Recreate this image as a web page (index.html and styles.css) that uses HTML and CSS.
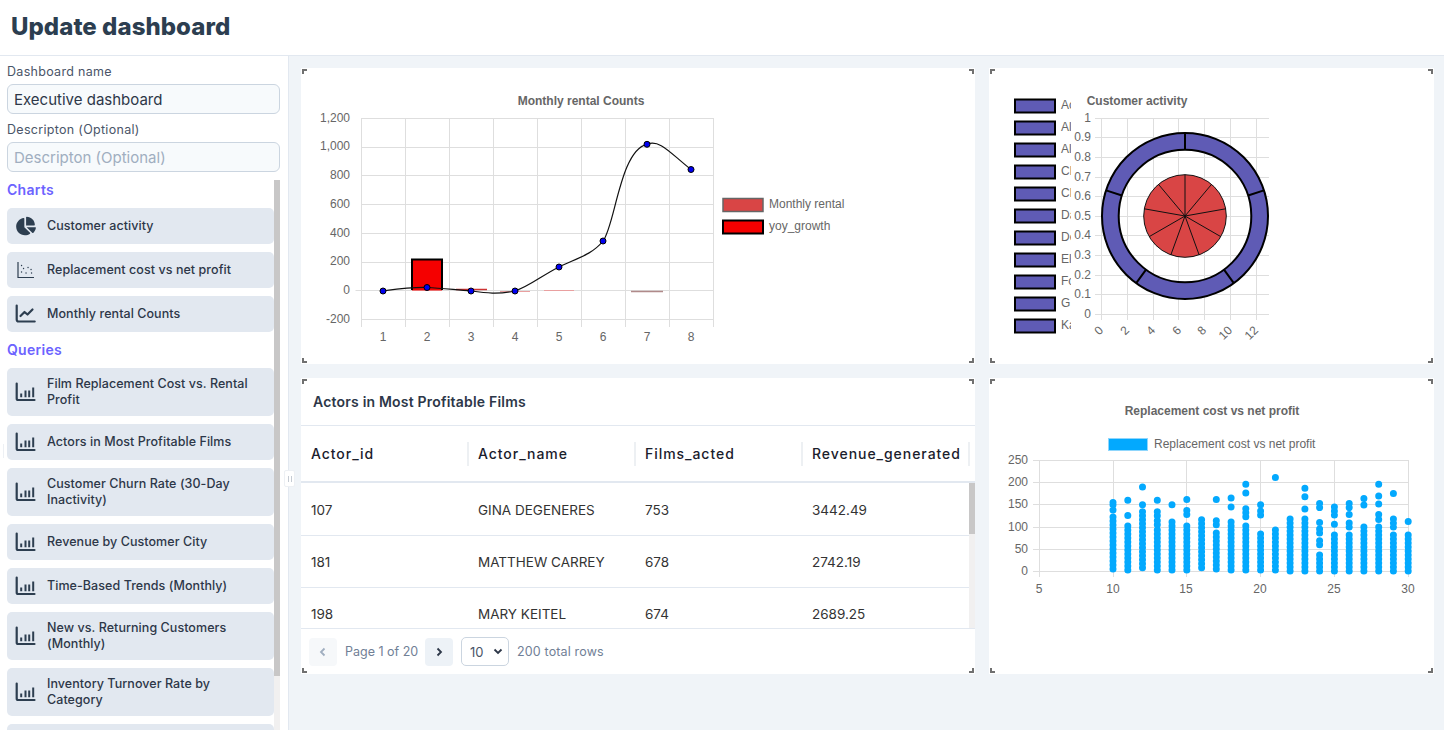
FILE: index.html
```html
<!DOCTYPE html>
<html lang="en">

<head>
    <meta charset="UTF-8">
    <meta name="viewport" content="width=device-width, initial-scale=1.0">
    <title>Update dashboard</title>
    <link rel="stylesheet" href="styles.css">
</head>

<body>
    <svg class="icon-defs" width="0" height="0">
        <symbol id="icon-pie" viewBox="0 0 576 512">
            <path fill="currentColor" d="M304 240V16.6c0-9 7-16.6 16-16.6C443.7 0 544 100.3 544 224c0 9-7.6 16-16.6 16H304zM32 272C32 150.7 122.1 50.3 239 34.3c9.2-1.3 17 6.1 17 15.4V288L412.5 444.5c6.7 6.7 6.2 17.7-1.5 23.1C371.8 495.6 323.8 512 272 512C139.5 512 32 404.6 32 272zm526.4 16c9.3 0 16.6 7.8 15.4 17c-7.7 55.9-34.6 105.6-73.9 142.3c-6 5.6-15.4 5.2-21.2-.7L320 288H558.4z" />
        </symbol>
        <symbol id="icon-scatter" viewBox="0 0 20 20">
            <path fill="none" stroke="currentColor" stroke-width="1.2" d="M2.5 2v15.5h16" />
            <path fill="none" stroke="currentColor" stroke-width="1.3" stroke-linecap="round" d="M6 5.5h.1M6 12h.1M8 8.5h.1M10.5 13h.1M12.5 7.5h.1M15.5 9.5h.1M16 13h.1" />
        </symbol>
        <symbol id="icon-line" viewBox="0 0 20 20">
            <path fill="none" stroke="currentColor" stroke-width="2.2" stroke-linecap="round" d="M1.2 1.5v14a2 2 0 0 0 2 2h16" />
            <path fill="none" stroke="currentColor" stroke-width="2.2" stroke-linecap="round" stroke-linejoin="round" d="M5 12l4-4 3 2.5 5-5" />
        </symbol>
        <symbol id="icon-bar" viewBox="0 0 20 20">
            <path fill="none" stroke="currentColor" stroke-width="2.2" stroke-linecap="round" d="M1.2 1.5v15a1.5 1.5 0 0 0 1.5 1.5h16.300" />
            <path fill="none" stroke="currentColor" stroke-width="2" d="M5.7 15.2v-3.600M10 15.2V8.5M13.7 15.2V8.5M17.7 15.2V5.5" />
        </symbol>
    </svg>

    <header class="topbar">
        <h1>Update dashboard</h1>
    </header>

    <div class="layout">
        <aside class="sidebar">
            <div class="form">
                <label for="dash-name">Dashboard name</label>
                <input id="dash-name" type="text" value="Executive dashboard">
                <label for="dash-desc">Descripton (Optional)</label>
                <input id="dash-desc" type="text" placeholder="Descripton (Optional)">
            </div>
            <div class="side-list">
                <h2>Charts</h2>
                <div class="card"><svg class="card-icon"><use href="#icon-pie" /></svg><span>Customer activity</span></div>
                <div class="card"><svg class="card-icon"><use href="#icon-scatter" /></svg><span>Replacement cost vs net profit</span></div>
                <div class="card"><svg class="card-icon"><use href="#icon-line" /></svg><span>Monthly rental Counts</span></div>
                <h2>Queries</h2>
                <div class="card"><svg class="card-icon"><use href="#icon-bar" /></svg><span>Film Replacement Cost vs. Rental Profit</span></div>
                <div class="card"><svg class="card-icon"><use href="#icon-bar" /></svg><span>Actors in Most Profitable Films</span></div>
                <div class="card"><svg class="card-icon"><use href="#icon-bar" /></svg><span>Customer Churn Rate (30-Day Inactivity)</span></div>
                <div class="card"><svg class="card-icon"><use href="#icon-bar" /></svg><span>Revenue by Customer City</span></div>
                <div class="card"><svg class="card-icon"><use href="#icon-bar" /></svg><span>Time-Based Trends (Monthly)</span></div>
                <div class="card"><svg class="card-icon"><use href="#icon-bar" /></svg><span>New vs. Returning Customers (Monthly)</span></div>
                <div class="card"><svg class="card-icon"><use href="#icon-bar" /></svg><span>Inventory Turnover Rate by Category</span></div>
                <div class="card"></div>
            </div>
            <div class="scrollbar side-scroll"><div class="scroll-thumb"></div></div>
            <div class="resize-handle"><i></i><i></i></div>
        </aside>

        <main class="board">
            <section class="panel">
                <svg class="chart" viewBox="301 68 674 296">
                    <text class="chart-title" x="581" y="105" text-anchor="middle">Monthly rental Counts</text>
                    <path class="grid" d="M361.5 118.5H713.5M361.5 147.5H713.5M361.5 175.5H713.5M361.5 204.5H713.5M361.5 233.5H713.5M361.5 262.5H713.5M355.5 290.5H713.5M361.5 319.5H713.5" />
                    <path class="grid" d="M361.5 118V327M405.5 118V327M449.5 118V327M493.5 118V327M537.5 118V327M581.5 118V327M625.5 118V327M669.5 118V327M713.5 118V327" />
                    <g class="tick" text-anchor="end">
                        <text x="350" y="122">1,200</text>
                        <text x="350" y="150">1,000</text>
                        <text x="350" y="179">800</text>
                        <text x="350" y="208">600</text>
                        <text x="350" y="237">400</text>
                        <text x="350" y="265">200</text>
                        <text x="350" y="294">0</text>
                        <text x="350" y="323">-200</text>
                    </g>
                    <g class="tick" text-anchor="middle">
                        <text x="383" y="341">1</text>
                        <text x="427" y="341">2</text>
                        <text x="471" y="341">3</text>
                        <text x="515" y="341">4</text>
                        <text x="559" y="341">5</text>
                        <text x="603" y="341">6</text>
                        <text x="647" y="341">7</text>
                        <text x="691" y="341">8</text>
                    </g>
                    <rect x="412" y="259.5" width="30" height="31" fill="#f50000" />
                    <path fill="none" stroke="#000" stroke-width="2" d="M412 290V259.5H442V290" />
                    <path fill="none" stroke="#c33" stroke-width="1.5" d="M456 289.5H487" />
                    <path fill="none" stroke="#e9a0a0" stroke-width="1" d="M500 291.5H530M544 290.5H574" />
                    <path fill="none" stroke="#b08a8a" stroke-width="1.5" d="M631 291.5H663" />
                    <path fill="none" stroke="#111" stroke-width="1.2" d="M383 291C398 289 412 287 427 287.5C442 288 456 290 471 291C486 293 498 294.5 515 291C530 286 541 276 559 267C575 259 592 255 603 241C615 226 620 150 647 144.3C660 139 670 153 691 169.5" />
                    <g fill="#0000f0" stroke="#000" stroke-width="1">
                        <circle cx="383" cy="291" r="3" />
                        <circle cx="427" cy="287.5" r="3" />
                        <circle cx="471" cy="291" r="3" />
                        <circle cx="515" cy="291" r="3" />
                        <circle cx="559" cy="267" r="3" />
                        <circle cx="603" cy="241" r="3" />
                        <circle cx="647" cy="144.3" r="3" />
                        <circle cx="691" cy="169.5" r="3" />
                    </g>
                    <rect x="723" y="198.5" width="40" height="13" fill="#d94545" stroke="#666" stroke-width="1.5" />
                    <text class="tick" x="769" y="208">Monthly rental</text>
                    <rect x="723" y="220.5" width="40" height="13" fill="#f50000" stroke="#000" stroke-width="2" />
                    <text class="tick" x="769" y="230">yoy_growth</text>
                </svg>
                <span class="corner tl"></span><span class="corner tr"></span><span class="corner bl"></span><span class="corner br"></span>
            </section>

            <section class="panel">
                <svg class="chart" viewBox="989 68 445 296">
                    <defs>
                        <clipPath id="legend-clip">
                            <rect x="1010" y="90" width="61" height="250" />
                        </clipPath>
                    </defs>
                    <g fill="#5f5bb5" stroke="#000" stroke-width="2">
                        <rect x="1015" y="99.5" width="40" height="13" />
                        <rect x="1015" y="121.5" width="40" height="13" />
                        <rect x="1015" y="143.5" width="40" height="13" />
                        <rect x="1015" y="165.5" width="40" height="13" />
                        <rect x="1015" y="187.5" width="40" height="13" />
                        <rect x="1015" y="209.5" width="40" height="13" />
                        <rect x="1015" y="231.5" width="40" height="13" />
                        <rect x="1015" y="253.5" width="40" height="13" />
                        <rect x="1015" y="275.5" width="40" height="13" />
                        <rect x="1015" y="297.5" width="40" height="13" />
                        <rect x="1015" y="319.5" width="40" height="13" />
                    </g>
                    <g class="tick" clip-path="url(#legend-clip)">
                        <text x="1061" y="109">Ac</text>
                        <text x="1061" y="131">Al</text>
                        <text x="1061" y="153">Al</text>
                        <text x="1061" y="175">Cl</text>
                        <text x="1061" y="197">Cl</text>
                        <text x="1061" y="219">Da</text>
                        <text x="1061" y="241">De</text>
                        <text x="1061" y="263">El</text>
                        <text x="1061" y="285">Fo</text>
                        <text x="1061" y="307">G</text>
                        <text x="1061" y="329">Ka</text>
                    </g>
                    <text class="chart-title" x="1137" y="105" text-anchor="middle">Customer activity</text>
                    <path class="grid" d="M1095 118.5H1269M1095 137.5H1269M1095 157.5H1269M1095 177.5H1269M1095 196.5H1269M1095 216.5H1269M1095 235.5H1269M1095 255.5H1269M1095 275.5H1269M1095 294.5H1269M1095 314.5H1269" />
                    <path class="grid" d="M1101.5 118V320M1127.5 118V320M1153.5 118V320M1178.5 118V320M1204.5 118V320M1230.5 118V320M1256.5 118V320" />
                    <g class="tick" text-anchor="end">
                        <text x="1091" y="122">1</text>
                        <text x="1091" y="141">0.9</text>
                        <text x="1091" y="161">0.8</text>
                        <text x="1091" y="181">0.7</text>
                        <text x="1091" y="200">0.6</text>
                        <text x="1091" y="220">0.5</text>
                        <text x="1091" y="239">0.4</text>
                        <text x="1091" y="259">0.3</text>
                        <text x="1091" y="279">0.2</text>
                        <text x="1091" y="298">0.1</text>
                        <text x="1091" y="318">0</text>
                    </g>
                    <g class="tick" text-anchor="end">
                        <text transform="translate(1104 331) rotate(-45)">0</text>
                        <text transform="translate(1130 331) rotate(-45)">2</text>
                        <text transform="translate(1156 331) rotate(-45)">4</text>
                        <text transform="translate(1182 331) rotate(-45)">6</text>
                        <text transform="translate(1207 331) rotate(-45)">8</text>
                        <text transform="translate(1233 331) rotate(-45)">10</text>
                        <text transform="translate(1259 331) rotate(-45)">12</text>
                    </g>
                    <circle cx="1185" cy="216" r="74.7" fill="none" stroke="#5f5bb5" stroke-width="16.7" />
                    <circle cx="1185" cy="216" r="83" fill="none" stroke="#000" stroke-width="2" />
                    <circle cx="1185" cy="216" r="66.3" fill="none" stroke="#000" stroke-width="2" />
                    <path fill="none" stroke="#000" stroke-width="2" d="M1185 149.7V133M1248.1 195.5L1263.9 190.4M1224 269.6L1233.8 283.1M1146 269.6L1136.2 283.1M1121.9 195.5L1106.1 190.4" />
                    <circle cx="1185" cy="216" r="41.3" fill="#d94545" stroke="#111" stroke-width="1" />
                    <path fill="none" stroke="#111" stroke-width="1" d="M1185 216V174.7M1185 216L1211.5 184.4M1185 216L1225.7 208.8M1185 216L1220.8 236.65M1185 216L1199.1 254.8M1185 216L1170.9 254.8M1185 216L1149.2 236.65M1185 216L1144.3 208.8M1185 216L1158.5 184.4" />
                </svg>
                <span class="corner tl"></span><span class="corner tr"></span><span class="corner bl"></span><span class="corner br"></span>
            </section>

            <section class="panel table-panel">
                <h3>Actors in Most Profitable Films</h3>
                <div class="table-head">
                    <div>Actor_id</div>
                    <div>Actor_name</div>
                    <div>Films_acted</div>
                    <div>Revenue_generated</div>
                </div>
                <div class="table-body">
                    <div class="table-rows">
                        <div class="table-row">
                            <div>107</div>
                            <div>GINA DEGENERES</div>
                            <div>753</div>
                            <div>3442.49</div>
                        </div>
                        <div class="table-row">
                            <div>181</div>
                            <div>MATTHEW CARREY</div>
                            <div>678</div>
                            <div>2742.19</div>
                        </div>
                        <div class="table-row">
                            <div>198</div>
                            <div>MARY KEITEL</div>
                            <div>674</div>
                            <div>2689.25</div>
                        </div>
                    </div>
                    <div class="scrollbar table-scroll"><div class="scroll-thumb"></div></div>
                </div>
                <div class="pager">
                    <button class="page-btn" disabled>
                        <svg width="12" height="12" viewBox="0 0 12 12"><path d="M7.5 2.5L4 6l3.5 3.5" /></svg>
                    </button>
                    <span class="page-text page-count">Page 1 of 20</span>
                    <button class="page-btn">
                        <svg width="12" height="12" viewBox="0 0 12 12"><path d="M4.5 2.5L8 6 4.5 9.5" /></svg>
                    </button>
                    <div class="page-size">
                        <select>
                            <option>10</option>
                        </select>
                        <svg width="12" height="12" viewBox="0 0 12 12"><path d="M2.5 4.5L6 8l3.5-3.5" /></svg>
                    </div>
                    <span class="page-text page-total">200 total rows</span>
                </div>
                <span class="corner tl"></span><span class="corner tr"></span><span class="corner bl"></span><span class="corner br"></span>
            </section>

            <section class="panel">
                <svg class="chart" viewBox="989 378 445 296">
                    <text class="chart-title" x="1212" y="415" text-anchor="middle">Replacement cost vs net profit</text>
                    <rect x="1108.5" y="438.5" width="39" height="12" fill="#03a9fe" stroke="#8fd6fc" />
                    <text class="tick" x="1154" y="448">Replacement cost vs net profit</text>
                    <path class="grid" d="M1033 460.5H1408.5M1033 482.5H1408.5M1033 504.5H1408.5M1033 527.5H1408.5M1033 549.5H1408.5M1033 571.5H1408.5" />
                    <path class="grid" d="M1039.5 460V577M1113.5 460V577M1186.5 460V577M1260.5 460V577M1334.5 460V577M1408.5 460V577" />
                    <g class="tick" text-anchor="end">
                        <text x="1028" y="464">250</text>
                        <text x="1028" y="486">200</text>
                        <text x="1028" y="508">150</text>
                        <text x="1028" y="531">100</text>
                        <text x="1028" y="553">50</text>
                        <text x="1028" y="575">0</text>
                    </g>
                    <g class="tick" text-anchor="middle">
                        <text x="1039" y="593">5</text>
                        <text x="1113" y="593">10</text>
                        <text x="1186" y="593">15</text>
                        <text x="1260" y="593">20</text>
                        <text x="1334" y="593">25</text>
                        <text x="1408" y="593">30</text>
                    </g>
                    <path class="scatter-run" d="M1113 569V516M1127.8 570V524.7M1127.8 500.3V496.3M1142.5 567.7V510M1157.3 570V529M1157.3 524.700V519M1157.3 515.8V509M1172 570V519M1172 504.7V500.7M1186.8 570V524.7M1186.8 514.5V510M1186.8 499.500V495.500M1201.6 567.7V515.8M1216.3 569V529M1216.3 524.7V520M1231.1 570V518M1245.8 570V525M1245.8 516.7V507M1260.6 570V530M1260.6 515V510M1275.4 570V528.7M1290.1 571V516.7M1304.9 571V515M1319.6 571V551M1319.6 544.7V538M1319.6 533V528M1319.6 507.6V501.6M1334.4 571V531M1334.4 515V505M1349.2 571V533.5M1349.2 527V519M1349.2 507.6V503.4M1363.9 571V525M1378.7 571V525M1393.4 571V531M1393.4 527V516M1408.2 571V533.5" />
                    <path class="scatter-dot" d="M1113 510h0M1113 504.7h0M1113 502.5h0M1127.8 515.4h0M1142.5 504.7h0M1142.5 487h0M1157.3 500.3h0M1216.3 499.4h0M1231.1 507h0M1231.1 498h0M1245.8 493h0M1245.8 484.3h0M1260.6 504.7h0M1275.4 477.6h0M1304.9 509h0M1304.9 496.7h0M1304.9 488.3h0M1319.6 522.5h0M1334.4 524.2h0M1349.2 514.5h0M1363.9 505h0M1363.9 498.5h0M1378.7 519.4h0M1378.7 514.5h0M1378.7 504h0M1378.7 496h0M1378.7 484.3h0M1393.4 493.6h0M1408.2 521.5h0" />
                </svg>
                <span class="corner tl"></span><span class="corner tr"></span><span class="corner bl"></span><span class="corner br"></span>
            </section>
        </main>
    </div>
</body>

</html>
```

FILE: styles.css
```css
* {
    margin: 0;
    padding: 0;
    box-sizing: border-box;
}

html,
body {
    height: 100%;
    overflow: hidden;
}

body {
    font-family: "Inter", "Liberation Sans", sans-serif;
    color: #2d3748;
    background: #fff;
}

.icon-defs {
    position: absolute;
}

.topbar {
    height: 56px;
    padding: 0 11px;
    display: flex;
    align-items: center;
    border-bottom: 1px solid #e2e8f0;
}

.topbar h1 {
    font-size: 24px;
    font-weight: 800;
    letter-spacing: 0.05px;
    color: #2c3e50;
    margin-top: -3px;
}

.layout {
    display: flex;
    height: 674px;
}

/* sidebar */
.sidebar {
    position: relative;
    width: 289px;
    flex: none;
    border-right: 1px solid #e2e8f0;
    display: flex;
    flex-direction: column;
}

.sidebar::before {
    content: "";
    position: absolute;
    left: 3px;
    top: 388px;
    width: 1px;
    height: 14px;
    background: #edf0f4;
}

.form {
    padding: 8px 8px 0 7px;
    height: 124px;
}

.form label {
    display: block;
    font-size: 12.5px;
    letter-spacing: 0.3px;
    line-height: 16px;
    height: 20px;
    color: #4a5568;
}

.form input {
    display: block;
    width: 273px;
    height: 30px;
    margin-bottom: 8px;
    padding: 0 6px;
    font: 15px "Inter", "Liberation Sans", sans-serif;
    color: #2d3748;
    background: #f7fafc;
    border: 1px solid #cbd5e0;
    border-radius: 6px;
    outline: none;
}

.form input::placeholder {
    color: #a0aec0;
}

.side-list {
    flex: 1;
    min-height: 0;
    padding-left: 7px;
    width: 274px;
    overflow: hidden;
}

.side-list h2 {
    font-size: 14px;
    font-weight: 600;
    letter-spacing: 0.3px;
    line-height: 20px;
    color: #6c63ff;
    height: 28px;
}

.card {
    display: flex;
    align-items: center;
    min-height: 36px;
    padding: 8px;
    margin-bottom: 8px;
    font-size: 12.5px;
    font-weight: 500;
    letter-spacing: 0.06px;
    line-height: 16px;
    background: #e2e8f0;
    border-radius: 5px;
}

.card-icon {
    width: 21px;
    height: 20px;
    flex: none;
    margin-right: 11px;
    color: #2d3e50;
}

/* headless shots drop native scrollbars, so these are drawn */
.scrollbar {
    position: absolute;
    width: 6px;
    background: #f1f0f0;
}

.scroll-thumb {
    background: #c8c7c7;
}

.side-scroll {
    left: 274px;
    top: 124px;
    bottom: 0;
}

.side-scroll .scroll-thumb {
    height: 496px;
}

.table-scroll {
    right: 0;
    top: 0;
    bottom: 0;
}

.table-scroll .scroll-thumb {
    height: 51px;
}

.resize-handle {
    position: absolute;
    right: -7px;
    top: 414px;
    width: 11px;
    height: 17px;
    display: flex;
    justify-content: center;
    gap: 2px;
    padding-top: 5px;
    background: #fff;
    border: 1px solid #edf0f4;
    border-radius: 2px;
}

.resize-handle i {
    width: 1px;
    height: 6px;
    background: #c5cbd3;
}

/* dashboard panels */
.board {
    flex: 1;
    padding: 12px;
    background: #f0f4f8;
    display: grid;
    grid-template-columns: 674px 445px;
    grid-template-rows: 296px 296px;
    gap: 14px;
}

.panel {
    position: relative;
    background: #fff;
    overflow: hidden;
}

.corner {
    position: absolute;
    width: 5px;
    height: 5px;
    border: 0 solid #707070;
}

.corner.tl {
    top: 1px;
    left: 1px;
    border-width: 2px 0 0 2px;
}

.corner.tr {
    top: 1px;
    right: 1px;
    border-width: 2px 2px 0 0;
}

.corner.bl {
    bottom: 1px;
    left: 1px;
    border-width: 0 0 2px 2px;
}

.corner.br {
    bottom: 1px;
    right: 1px;
    border-width: 0 2px 2px 0;
}

.chart {
    display: block;
    width: 100%;
    height: 100%;
}

.chart text {
    font-family: "Liberation Sans", Arial, sans-serif;
}

.chart-title {
    font-size: 12px;
    font-weight: 700;
    fill: #666;
}

.tick {
    font-size: 12px;
    fill: #666;
}

.grid {
    fill: none;
    stroke: #dedede;
    stroke-width: 1;
}

.scatter-run {
    fill: none;
    stroke: #03a9fe;
    stroke-width: 7;
    stroke-linecap: round;
    stroke-dasharray: 0 4;
}

.scatter-dot {
    fill: none;
    stroke: #03a9fe;
    stroke-width: 7;
    stroke-linecap: round;
}

/* table */
.table-panel {
    display: flex;
    flex-direction: column;
}

.table-panel h3 {
    height: 48px;
    padding: 0 12px;
    display: flex;
    align-items: center;
    font-size: 14px;
    font-weight: 600;
    letter-spacing: 0.2px;
    border-bottom: 1px solid #e2e8f0;
}

.table-head,
.table-row {
    display: grid;
    grid-template-columns: repeat(4, 167px);
}

.table-head {
    height: 57px;
    align-items: center;
    font-size: 14px;
    font-weight: 500;
    letter-spacing: 0.95px;
    color: #1a202c;
    border-bottom: 2px solid #e2e8f0;
}

.table-head div {
    position: relative;
    height: 24px;
    line-height: 24px;
    padding-left: 10px;
    white-space: nowrap;
}

.table-head div::after {
    content: "";
    position: absolute;
    right: -1px;
    top: 0;
    width: 2px;
    height: 24px;
    background: #edf0f3;
}

.table-body {
    position: relative;
    flex: 1;
    min-height: 0;
    overflow: hidden;
}

.table-rows {
    padding-top: 1px;
}

.table-row {
    height: 52px;
    align-items: center;
    font-size: 13.5px;
    color: #333;
    border-bottom: 1px solid #e2e8f0;
}

.table-row div {
    padding-left: 10px;
}

.pager {
    height: 46px;
    flex: none;
    padding: 0 8px;
    display: flex;
    align-items: center;
    gap: 8px;
    border-top: 1px solid #e2e8f0;
}

.page-btn {
    width: 28px;
    height: 28px;
    display: flex;
    align-items: center;
    justify-content: center;
    background: #edf2f7;
    border: none;
    border-radius: 4px;
}

.page-btn:disabled {
    background: #f6f8fa;
}

.page-btn svg,
.page-size svg {
    fill: none;
    stroke: #2d3748;
    stroke-width: 1.8;
}

.page-btn:disabled svg {
    stroke: #a0aec0;
}

.page-text {
    font-size: 12.5px;
    color: #718096;
}

.page-count {
    width: 72px;
    white-space: nowrap;
}

.page-total {
    letter-spacing: 0.15px;
}

.page-size {
    position: relative;
    width: 48px;
    height: 29px;
}

.page-size select {
    width: 100%;
    height: 100%;
    padding-left: 8px;
    font: 13px "Inter", "Liberation Sans", sans-serif;
    color: #4a5568;
    appearance: none;
    background: #fff;
    border: 1px solid #cbd5e0;
    border-radius: 5px;
}

.page-size svg {
    position: absolute;
    right: 5px;
    top: 8px;
    pointer-events: none;
}
```
